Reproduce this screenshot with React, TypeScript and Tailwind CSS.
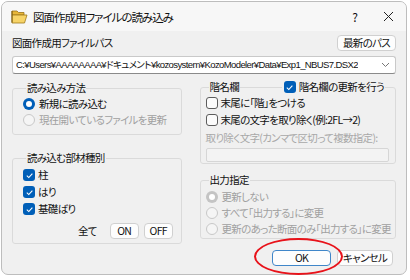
import React from "react";

const font = "[font-family:'Noto_Sans_CJK_JP','Noto_Sans',sans-serif] [font-feature-settings:'palt']";

function Radio({ checked, disabled, label }: { checked?: boolean; disabled?: boolean; label: string }) {
  return (
    <div className="flex items-center h-[16px] gap-[4px] whitespace-nowrap">
      {checked ? (
        <span className={`shrink-0 w-[12px] h-[12px] rounded-full flex items-center justify-center ${disabled ? "bg-[#c4c4c4]" : "bg-[#005fb8]"}`}>
          <span className="w-[6px] h-[6px] rounded-full bg-white" />
        </span>
      ) : (
        <span className={`shrink-0 w-[12px] h-[12px] rounded-full border ${disabled ? "border-[#c8c8c8] bg-[#f5f5f5]" : "border-[#5a5a5a] bg-white"}`} />
      )}
      <span className={disabled ? "text-[#a0a0a0]" : "text-[#111]"}>{label}</span>
    </div>
  );
}

function Check({ checked, label }: { checked?: boolean; label: string }) {
  return (
    <div className="flex items-center gap-[3px] h-[14px] whitespace-nowrap">
      {checked ? (
        <span className="shrink-0 w-[12px] h-[12px] rounded-[3px] bg-[#005fb8] flex items-center justify-center">
          <svg width="9" height="9" viewBox="0 0 10 10">
            <path d="M2 5.2 L4.2 7.3 L8.2 2.8" fill="none" stroke="white" strokeWidth="1.2" />
          </svg>
        </span>
      ) : (
        <span className="shrink-0 w-[12px] h-[12px] rounded-[3px] border border-[#5c5c5c] bg-[#fbfbfb]" />
      )}
      <span className="text-[#111]">{label}</span>
    </div>
  );
}

function Btn({ children, w, primary }: { children: React.ReactNode; w: string; primary?: boolean }) {
  return (
    <div
      className={`${w} h-[16px] rounded-[4px] bg-[#fdfdfd] flex items-center justify-center border ${
        primary ? "border-[#3f86c9]" : "border-[#d0d0d0]"
      } text-[#111] whitespace-nowrap`}
    >
      {children}
    </div>
  );
}

export default function App() {
  return (
    <div className={`relative w-[410px] h-[280px] bg-white pl-[1px] pt-[1px] text-[10.5px] tracking-[-0.7px] leading-[14px] ${font}`}>
      <div className="w-[406px] h-[274px] rounded-[7px] border border-[#bdbdbd] bg-[#f0f0f0] overflow-hidden">
        {/* title bar */}
        <div className="h-[29px] bg-[#f7f7f7] flex items-center pl-[9px] text-[11.5px] tracking-[-1px] text-[#111]">
          <svg width="17" height="15" viewBox="0 0 17 15" className="mr-[5px]">
            <path d="M1 2 h5 l1.5 1.5 H13 v2.5 H1 Z" fill="#e8b73a" stroke="#9c7418" strokeWidth="0.8" />
            <path d="M1 6 h15 l-2.5 8 H1 Z" fill="#f7d468" stroke="#a07a1a" strokeWidth="0.8" />
            <path d="M1 13.5 V2" stroke="#7a5a10" strokeWidth="1" />
          </svg>
          <span>図面作成用ファイルの読み込み</span>
          <span className="ml-auto mr-[26px] text-[12px]">?</span>
          <svg width="11" height="11" viewBox="0 0 11 11" className="mr-[12px]">
            <path d="M1 1 L10 10 M10 1 L1 10" stroke="#222" strokeWidth="1" />
          </svg>
        </div>

        <div className="px-[10px]">
          {/* path row */}
          <div className="mt-[4px] flex items-center justify-between">
            <span className="text-[#111]">図面作成用ファイルパス</span>
            <Btn w="w-[59px]">最新のパス</Btn>
          </div>
          <div className="mt-[5px] h-[18px] bg-white border border-[#c9c9c9] border-b-[#8a8a8a] rounded-[3px] flex items-center pl-[3px] pr-[5px] text-[9.5px] tracking-[-0.6px] text-[#111] [font-family:'Liberation_Sans','Noto_Sans_CJK_JP',sans-serif]">
            <span className="whitespace-nowrap overflow-hidden">C:¥Users¥AAAAAAAA¥ドキュメント¥kozosystem¥KozoModeler¥Data¥Exp1_NBUS7.DSX2</span>
            <svg width="9" height="6" viewBox="0 0 9 6" className="ml-auto shrink-0">
              <path d="M1 1 L4.5 4.5 L8 1" fill="none" stroke="#777" strokeWidth="1" />
            </svg>
          </div>

          {/* columns */}
          <div className="mt-[7px] flex gap-[18px]">
            <div className="w-[170px] flex flex-col gap-[16px]">
              <fieldset className="h-[54px] border border-[#dadada] rounded-[3px] pl-[10px] pt-[1px]">
                <legend className="ml-[3px] px-[1px] text-[#111]">読み込み方法</legend>
                <Radio checked label="新規に読み込む" />
                <Radio disabled label="現在開いているファイルを更新" />
              </fieldset>
              <fieldset className="h-[93px] border border-[#dadada] rounded-[3px] pl-[10px] pt-[3px]">
                <legend className="ml-[3px] px-[1px] text-[#111]">読み込む部材種別</legend>
                <div className="flex flex-col gap-[3px]">
                  <Check checked label="柱" />
                  <Check checked label="はり" />
                  <Check checked label="基礎ばり" />
                </div>
                <div className="mt-[7px] flex items-center">
                  <span className="ml-[55px] mr-[13px] text-[#111]">全て</span>
                  <Btn w="w-[29px]">ON</Btn>
                  <div className="w-[5px]" />
                  <Btn w="w-[29px]">OFF</Btn>
                </div>
              </fieldset>
            </div>

            <div className="w-[197px] flex flex-col gap-[9px] -mt-[1px]">
              <fieldset className="relative h-[84px] border border-[#dadada] rounded-[3px] pl-[5px] pr-[6px] pt-[2px]">
                <legend className="ml-[3px] px-[1px] text-[#111]">階名欄</legend>
                <div className="absolute right-[10px] -top-[14px] bg-[#f0f0f0] pl-[2px] pr-[1px]">
                  <Check checked label="階名欄の更新を行う" />
                </div>
                <div className="flex flex-col gap-[3px]">
                  <Check label="末尾に「階」をつける" />
                  <Check label="末尾の文字を取り除く(例:2FL→2)" />
                </div>
                <div className="mt-[4px] text-[#a8a8a8] whitespace-nowrap">取り除く文字(カンマで区切って複数指定):</div>
                <div className="mt-[3px] h-[14px] border border-[#d6d6d6] bg-[#f3f3f3] rounded-[2px]" />
              </fieldset>
              <fieldset className="h-[66px] border border-[#dadada] rounded-[3px] pl-[5px] pt-[2px]">
                <legend className="ml-[3px] px-[1px] text-[#111]">出力指定</legend>
                <Radio checked disabled label="更新しない" />
                <Radio disabled label="すべて「出力する」に変更" />
                <Radio disabled label="更新のあった断面のみ「出力する」に変更" />
              </fieldset>
            </div>
          </div>

          {/* footer */}
          <div className="mt-[6px] flex justify-end gap-[6px] pr-[3px]">
            <Btn w="w-[59px]" primary>OK</Btn>
            <Btn w="w-[56px]">キャンセル</Btn>
          </div>
        </div>
      </div>
      {/* red annotation ellipse */}
      <div className="absolute left-[254px] top-[238px] w-[89px] h-[37px] rounded-[50%] border-2 border-[#e8121a]" />
    </div>
  );
}
